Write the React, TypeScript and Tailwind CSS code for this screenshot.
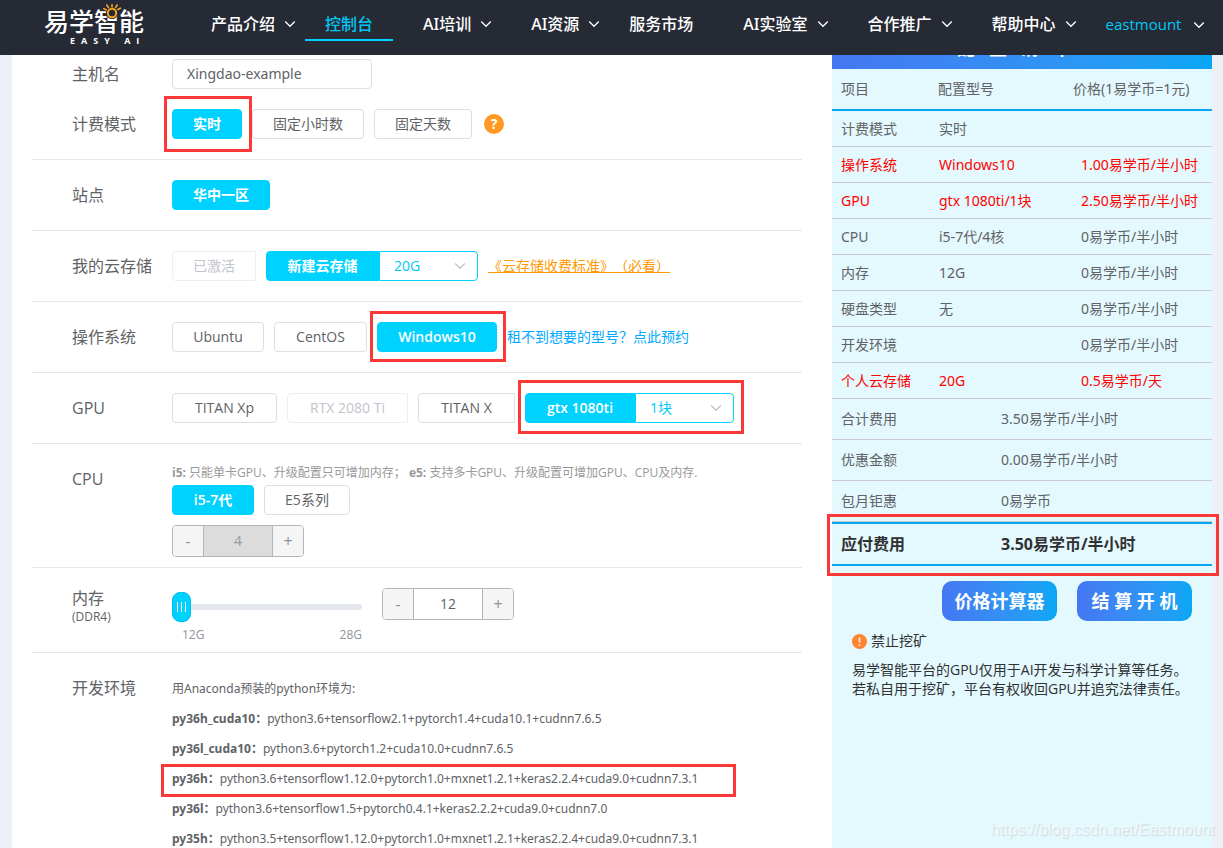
import type { ReactNode } from "react";
import clsx from "clsx";

const NAV = [
  { label: "产品介绍", sub: true },
  { label: "控制台", active: true },
  { label: "AI培训", sub: true },
  { label: "AI资源", sub: true },
  { label: "服务市场" },
  { label: "AI实验室", sub: true },
  { label: "合作推广", sub: true },
  { label: "帮助中心", sub: true },
];

const ITEMS = [
  { name: "计费模式", model: "实时", price: "" },
  { name: "操作系统", model: "Windows10", price: "1.00易学币/半小时", changed: true },
  { name: "GPU", model: "gtx 1080ti/1块", price: "2.50易学币/半小时", changed: true },
  { name: "CPU", model: "i5-7代/4核", price: "0易学币/半小时" },
  { name: "内存", model: "12G", price: "0易学币/半小时" },
  { name: "硬盘类型", model: "无", price: "0易学币/半小时" },
  { name: "开发环境", model: "", price: "0易学币/半小时" },
  { name: "个人云存储", model: "20G", price: "0.5易学币/天", changed: true },
];

const TOTALS = [
  { name: "合计费用", value: "3.50易学币/半小时" },
  { name: "优惠金额", value: "0.00易学币/半小时" },
  { name: "包月钜惠", value: "0易学币" },
];

const ENVS = [
  { name: "py36h_cuda10", packages: "python3.6+tensorflow2.1+pytorch1.4+cuda10.1+cudnn7.6.5" },
  { name: "py36l_cuda10", packages: "python3.6+pytorch1.2+cuda10.0+cudnn7.6.5" },
  { name: "py36h", packages: "python3.6+tensorflow1.12.0+pytorch1.0+mxnet1.2.1+keras2.2.4+cuda9.0+cudnn7.3.1", marked: true },
  { name: "py36l", packages: "python3.6+tensorflow1.5+pytorch0.4.1+keras2.2.2+cuda9.0+cudnn7.0" },
  { name: "py35h", packages: "python3.5+tensorflow1.12.0+pytorch1.0+mxnet1.2.1+keras2.2.4+cuda9.0+cudnn7.3.1" },
];

// Red frame drawn over the parts worth noticing
function Mark({ className }: { className: string }) {
  return <span aria-hidden className={clsx("pointer-events-none absolute z-10 border-3 border-[#fb3838]", className)} />;
}

function Chevron({ className }: { className?: string }) {
  return (
    <svg viewBox="0 0 12 8" className={clsx("h-2 w-3", className)} fill="none" stroke="currentColor" strokeWidth="1.3">
      <path d="M1.2 1.5L6 6.3L10.8 1.5" />
    </svg>
  );
}

function Logo() {
  return (
    <a href="#" className="relative block w-[137px] shrink-0 text-white">
      <span className="block font-['Noto_Sans_CJK_SC',sans-serif] text-[25px] leading-8 font-medium">易学智能</span>
      <span className="ml-[26px] block text-[9px] leading-[9px] font-bold tracking-[6px]">EASY AI</span>
      {/* Sun over the third character */}
      <svg viewBox="0 0 24 20" className="absolute -top-1 left-[55px] h-5 w-6" fill="none">
        <circle cx="13" cy="13" r="6" fill="#262a35" />
        <circle cx="13" cy="13" r="4.2" stroke="#f5a623" strokeWidth="2" />
        <path
          d="M13 7V4.8M9.5 7.5L7.8 5M16.5 7.5l1.7-2.5M18.8 9.5l2.6-1.3M7.2 9.8L4.8 8.6"
          stroke="#f5a623"
          strokeWidth="1.6"
          strokeLinecap="round"
        />
      </svg>
    </a>
  );
}

function Header() {
  return (
    <header className="flex h-[55px] shrink-0 items-start bg-[#262a35] pt-1 pl-11">
      <Logo />
      <nav className="mt-1 flex font-['Noto_Sans','Noto_Sans_CJK_SC',sans-serif] text-base font-medium whitespace-nowrap">
        {NAV.map(({ label, sub, active }) => (
          <a
            key={label}
            href="#"
            className={clsx(
              "flex h-[33px] items-center border-b-2 pl-5",
              sub ? "ml-[10px] gap-[9px] pr-[9px]" : "pr-5",
              active ? "border-[#00d2ff] text-[#00c8f5]" : "border-transparent text-white"
            )}
          >
            {label}
            {sub && <Chevron />}
          </a>
        ))}
      </nav>
      <a href="#" className="mt-1 ml-5 flex h-[33px] items-center gap-3 text-[15px] text-[#00c8f5]">
        eastmount
        <Chevron className="text-white" />
      </a>
    </header>
  );
}

interface OptionProps {
  children: ReactNode;
  active?: boolean;
  disabled?: boolean;
  className?: string;
}

function Option({ children, active, disabled, className }: OptionProps) {
  return (
    <button
      type="button"
      disabled={disabled}
      className={clsx(
        "h-[30px] shrink-0 border text-sm whitespace-nowrap",
        active && "border-[#00d2ff] bg-[#00d2ff] font-semibold text-white",
        disabled && "border-[#ebeef5] bg-white text-[#c0c4cc]",
        !active && !disabled && "border-[#dcdfe6] bg-white text-[#606266]",
        className
      )}
    >
      {children}
    </button>
  );
}

function Picker({ label, value }: { label: string; value: string }) {
  return (
    <div className="relative w-[99px]">
      <select
        aria-label={label}
        defaultValue={value}
        className="h-[30px] w-full appearance-none rounded-r border border-[#00d2ff] bg-white pl-3.5 text-sm text-[#00c8f5] outline-none"
      >
        <option>{value}</option>
      </select>
      <Chevron className="pointer-events-none absolute top-[11px] right-3 text-[#c0c4cc]" />
    </div>
  );
}

function Stepper({ label, value, disabled }: { label: string; value: number; disabled?: boolean }) {
  return (
    <div className="flex h-8 w-[132px] shrink-0 overflow-hidden rounded border border-[#b4b6ba] text-[#909399]">
      <button type="button" aria-label={`${label} 减少`} className="w-[31px] border-r border-[#b4b6ba] bg-[#f5f5f5]">
        -
      </button>
      <input
        aria-label={label}
        defaultValue={value}
        disabled={disabled}
        className={clsx("min-w-0 flex-1 text-center text-sm", disabled ? "bg-[#dcdcdc] text-[#999]" : "bg-white text-[#606266]")}
      />
      <button type="button" aria-label={`${label} 增加`} className="w-[31px] border-l border-[#b4b6ba] bg-[#f5f5f5]">
        +
      </button>
    </div>
  );
}

interface RowProps {
  label: ReactNode;
  children: ReactNode;
  className?: string;
}

function Row({ label, children, className = "py-5" }: RowProps) {
  return (
    <section className={clsx("flex border-b border-[#e6e6e6] pl-10", className)}>
      <div className="w-[100px] shrink-0 text-base leading-[30px]">{label}</div>
      <div className="min-w-0 flex-1">{children}</div>
    </section>
  );
}

function ConfigForm() {
  return (
    <form className="min-w-0 flex-1 text-[#606266]">
      <div className="flex pt-1 pl-10">
        <label htmlFor="host" className="w-[100px] shrink-0 text-base leading-[30px]">
          主机名
        </label>
        <input
          id="host"
          defaultValue="Xingdao-example"
          className="h-[30px] w-[200px] rounded border border-[#dcdfe6] bg-white px-3.5 pb-0.5 font-['Noto_Sans',sans-serif] text-sm outline-none"
        />
      </div>

      <Row label="计费模式">
        <div className="flex items-center gap-2.5">
          <div className="relative flex">
            <Option active className="rounded px-5">实时</Option>
            <Mark className="-inset-y-[13px] -right-2.5 -left-2" />
          </div>
          <Option className="rounded px-5">固定小时数</Option>
          <Option className="rounded px-5">固定天数</Option>
          <button type="button" aria-label="帮助" className="ml-0.5 h-5 w-5 rounded-full bg-[#ff9921] text-sm leading-5 font-bold text-white">
            ?
          </button>
        </div>
      </Row>

      <Row label="站点">
        <Option active className="block rounded px-5">华中一区</Option>
      </Row>

      <Row label="我的云存储">
        <div className="flex items-center gap-2.5">
          <Option disabled className="rounded-l px-5">已激活</Option>
          <div className="flex">
            <Option active className="w-[113px] rounded-l">新建云存储</Option>
            <Picker label="云存储容量" value="20G" />
          </div>
          <a href="#" className="text-sm whitespace-nowrap text-[#ff9900] underline [text-spacing-trim:space-all]">
            《云存储收费标准》（必看）
          </a>
        </div>
      </Row>

      <Row label="操作系统">
        <div className="flex items-center gap-2.5">
          <Option className="w-[92px] rounded">Ubuntu</Option>
          <Option className="w-[93px] rounded">CentOS</Option>
          <div className="relative flex">
            <Option active className="w-[120px] rounded">Windows10</Option>
            <Mark className="-top-[11px] -right-[9px] -bottom-2.5 -left-[7px]" />
          </div>
          <a href="#" className="text-sm whitespace-nowrap text-[#00a8ff]">租不到想要的型号？点此预约</a>
        </div>
      </Row>

      <Row label="GPU">
        <div className="flex items-center gap-2.5">
          <Option className="w-[105px] rounded">TITAN Xp</Option>
          <Option disabled className="w-[121px] rounded-l">RTX 2080 Ti</Option>
          <Option className="w-[97px] rounded-l">TITAN X</Option>
          <div className="relative flex">
            <Option active className="w-[110px] rounded-l">gtx 1080ti</Option>
            <Picker label="GPU 数量" value="1块" />
            <Mark className="-top-[13px] -right-2.5 -bottom-[11px] -left-[7px]" />
          </div>
        </div>
      </Row>

      <Row label="CPU" className="pt-5 pb-2.5">
        <p className="text-xs leading-[18px] whitespace-nowrap text-[#999]">
          <b>i5:</b> 只能单卡GPU、升级配置只可增加内存； <b>e5:</b> 支持多卡GPU、升级配置可增加GPU、CPU及内存.
        </p>
        <div className="mt-[3px] mb-2.5 flex gap-2.5">
          <Option active className="w-[82px] rounded">i5-7代</Option>
          <Option className="w-[86px] rounded">E5系列</Option>
        </div>
        <Stepper label="CPU 核数" value={4} disabled />
      </Row>

      <Row
        label={
          <>
            <div className="leading-5">内存</div>
            <div className="text-xs leading-[18px]">(DDR4)</div>
          </>
        }
        className="pt-5 pb-2"
      >
        <div className="flex gap-5">
          <div className="w-[190px] pt-1">
            <input
              type="range"
              aria-label="内存容量"
              min={12}
              max={28}
              defaultValue={12}
              className="block h-[30px] w-full appearance-none bg-transparent [&::-webkit-slider-runnable-track]:h-1.5 [&::-webkit-slider-runnable-track]:rounded-full [&::-webkit-slider-runnable-track]:bg-[#e4e7ed] [&::-webkit-slider-thumb]:-mt-3 [&::-webkit-slider-thumb]:h-[30px] [&::-webkit-slider-thumb]:w-[19px] [&::-webkit-slider-thumb]:appearance-none [&::-webkit-slider-thumb]:rounded-lg [&::-webkit-slider-thumb]:border [&::-webkit-slider-thumb]:border-[#00bdf0] [&::-webkit-slider-thumb]:bg-[#00d2ff] [&::-webkit-slider-thumb]:bg-[linear-gradient(to_right,transparent_4px,white_4px,white_5px,transparent_5px,transparent_8px,white_8px,white_9px,transparent_9px,transparent_12px,white_12px,white_13px,transparent_13px)] [&::-webkit-slider-thumb]:bg-[length:100%_10px] [&::-webkit-slider-thumb]:bg-center [&::-webkit-slider-thumb]:bg-no-repeat"
            />
            <div className="mt-1 flex justify-between pl-2.5 text-xs leading-[18px] text-[#909399]">
              <span>12G</span>
              <span>28G</span>
            </div>
          </div>
          <Stepper label="内存" value={12} />
        </div>
      </Row>

      <section className="flex pt-5 pl-10">
        <div className="w-[100px] shrink-0 text-base leading-[30px]">开发环境</div>
        <div className="mt-px font-['Noto_Sans','Noto_Sans_CJK_SC',sans-serif] text-xs leading-[30px] whitespace-nowrap">
          <p>用Anaconda预装的python环境为:</p>
          {ENVS.map((env) => (
            <p key={env.name} className="relative">
              <b>{env.name}：</b>
              {env.packages}
              {env.marked && <Mark className="top-0 -right-[38px] -bottom-[3px] -left-[11px]" />}
            </p>
          ))}
        </div>
      </section>
    </form>
  );
}

function Summary() {
  return (
    <aside className="w-[380px] shrink-0 bg-[#e4f9fd] text-sm text-[#606266]">
      <div className="flex h-3.5 items-end justify-center overflow-hidden bg-linear-to-r from-[#4477f2] to-[#06a7f5] pr-4">
        <h2 className="shrink-0 pb-[7px] text-lg font-bold whitespace-pre text-white">配   置   清   单</h2>
      </div>

      <table className="w-full table-fixed border-separate border-spacing-0 text-left font-['Noto_Sans','Noto_Sans_CJK_SC',sans-serif] whitespace-nowrap">
        <thead>
          <tr className="h-[42px] *:border-b-2 *:border-[#06a7f5] *:font-normal">
            <th className="w-[98px] pl-[9px]">项目</th>
            <th className="w-[142px] pl-2">配置型号</th>
            <th className="pl-px">价格(1易学币=1元)</th>
          </tr>
        </thead>
        <tbody>
          {ITEMS.map((item) => (
            <tr key={item.name} className={clsx("h-9 *:border-b *:border-[#c8cccd] *:pl-[9px]", item.changed && "text-[#ff0000]")}>
              <td>{item.name}</td>
              <td>{item.model}</td>
              <td>{item.price}</td>
            </tr>
          ))}
        </tbody>
      </table>

      <dl className="font-['Noto_Sans','Noto_Sans_CJK_SC',sans-serif]">
        {TOTALS.map((total) => (
          <div key={total.name} className="flex h-[41px] items-center border-b border-[#c8cccd] pl-[9px]">
            <dt className="w-40">{total.name}</dt>
            <dd>{total.value}</dd>
          </div>
        ))}
        <div className="relative flex h-11 items-center border-y-2 border-[#06a7f5] pl-[9px] text-base font-bold text-[#303133]">
          <dt className="w-40">应付费用</dt>
          <dd>3.50易学币/半小时</dd>
          <Mark className="-top-2.5 -right-[7px] -bottom-3 -left-[5px]" />
        </div>
      </dl>

      <div className="mt-[15px] flex justify-end gap-5 pr-5 text-lg font-bold text-white">
        <button type="button" className="h-10 w-[115px] rounded-[10px] bg-linear-to-r from-[#4477f2] to-[#06a7f5]">
          价格计算器
        </button>
        <button type="button" className="h-10 w-[115px] rounded-[10px] bg-linear-to-r from-[#4477f2] to-[#06a7f5]">
          结 算 开 机
        </button>
      </div>

      <div className="pt-2.5 pl-5 text-[#303133]">
        <p className="flex items-center gap-1 leading-5">
          <svg viewBox="0 0 15 15" className="h-[15px] w-[15px]">
            <circle cx="7.5" cy="7.5" r="7.5" fill="#ff8330" />
            <path d="M7.5 3.2v5.4M7.5 10.3v1.7" stroke="#ffe3cf" strokeWidth="1.8" />
          </svg>
          禁止挖矿
        </p>
        <p className="mt-[9px] leading-[19px] whitespace-nowrap">
          易学智能平台的GPU仅用于AI开发与科学计算等任务。
          <br />
          若私自用于挖矿，平台有权收回GPU并追究法律责任。
        </p>
      </div>
    </aside>
  );
}

export default function App() {
  return (
    <div className="relative flex h-screen flex-col overflow-hidden bg-[#edf1f7] font-['Open_Sans','Noto_Sans_CJK_SC',sans-serif]">
      <Header />
      <main className="flex min-h-0 flex-1 pr-[11px] pl-3">
        <div className="flex min-w-0 flex-1 gap-[30px] bg-white pl-5">
          <ConfigForm />
          <Summary />
        </div>
      </main>
      <p className="absolute right-2 bottom-2 font-['Liberation_Sans',sans-serif] text-base leading-5 text-white/60 [text-shadow:1px_1px_1px_#ccd8dc]">
        https://blog.csdn.net/Eastmount
      </p>
    </div>
  );
}
